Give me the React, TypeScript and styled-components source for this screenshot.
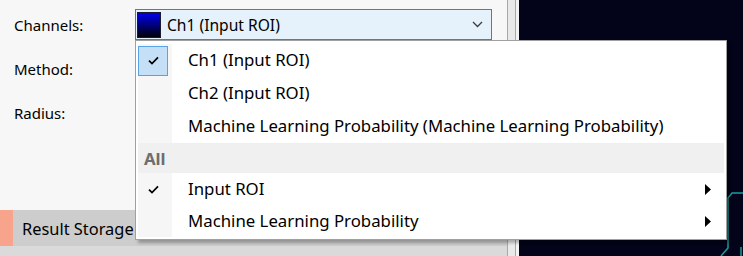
import React from "react";
import styled, { createGlobalStyle } from "styled-components";

const Global = createGlobalStyle`
  html, body { margin: 0; padding: 0; background: #f7f7f7; }
  body { font-family: "Noto Sans", "Open Sans", sans-serif; }
`;

const Screen = styled.div`
  position: relative;
  width: 743px;
  height: 256px;
  overflow: hidden;
  display: flex;
  font-family: "Noto Sans", "Open Sans", sans-serif;
  font-size: 15px;
  color: #000;
`;

const Panel = styled.div`
  width: 507px;
  display: flex;
  flex-direction: column;
  background: #f7f7f7;
`;

const Form = styled.div`
  flex: 1;
  display: flex;
  flex-direction: column;
  gap: 13px;
  padding: 9px 0 0 14px;
`;

const Row = styled.div`
  display: flex;
  align-items: center;
  height: 31px;
`;

const Label = styled.span`
  width: 121px;
  font-size: 15px;
`;

const Combo = styled.div`
  box-sizing: border-box;
  width: 357px;
  height: 31px;
  border: 1px solid #2c86da;
  background: #e5f1fb;
  display: flex;
  align-items: center;
  padding: 0 8px 0 1px;
  gap: 6px;
`;

const Swatch = styled.div`
  width: 24px;
  height: 26px;
  box-sizing: border-box;
  border: 1px solid #1a1a2a;
  background: linear-gradient(#0000f0, #000008);
`;

const ComboText = styled.span`
  flex: 1;
  font-size: 15.6px;
`;

const ResultBar = styled.div`
  height: 36px;
  display: flex;
  align-items: center;
  background: #cdcdcd;
`;

const Accent = styled.div`
  width: 13px;
  align-self: stretch;
  background: #f8a38c;
`;

const BarLabel = styled.span`
  margin-left: 9px;
  font-size: 16.4px;
`;

const BottomStrip = styled.div`
  height: 10px;
  background: #dadada;
`;

const ScrollStrip = styled.div`
  width: 12px;
  background: linear-gradient(
    to right,
    #a8a8a8 0 1px,
    #e9e9e9 1px 8px,
    #a8a8a8 8px 9px,
    #f2f2f2 9px
  );
`;

const Canvas = styled.div`
  flex: 1;
  background: #03031a;
  display: flex;
`;

const Plot = styled.svg`
  width: 100%;
  height: 100%;
`;

const Menu = styled.div`
  position: absolute;
  left: 135px;
  top: 40px;
  width: 592px;
  box-sizing: border-box;
  border: 1px solid #a0a0a0;
  background: #ffffff;
  padding: 3px 2px 2px;
  box-shadow: 3px 3px 3px rgba(0, 0, 0, 0.28);
  display: flex;
  flex-direction: column;
  font-size: 16.8px;
`;

const Item = styled.div<{ $h: number }>`
  display: flex;
  align-items: center;
  height: ${(p) => p.$h}px;
`;

const Gutter = styled.div`
  width: 34px;
  align-self: stretch;
  display: flex;
  align-items: center;
  background: #f6f6f6;
`;

const CheckBox = styled.div<{ $active?: boolean }>`
  box-sizing: border-box;
  width: 30px;
  height: 30px;
  display: flex;
  align-items: center;
  justify-content: center;
  background: ${(p) => (p.$active ? "#c5dff7" : "transparent")};
  border: 1px solid ${(p) => (p.$active ? "#5aa2e6" : "transparent")};
`;

const ItemText = styled.span`
  flex: 1;
  padding-left: 16px;
  line-height: 1;
`;

const SubArrow = styled.svg`
  margin-right: 13px;
`;

const Header = styled.div`
  height: 30px;
  display: flex;
  align-items: center;
  padding-left: 6px;
  background: #f0f0f0;
  font-weight: 700;
  color: #6e6e6e;
`;

const Check = () => (
  <svg width="11" height="9" viewBox="0 0 11 9">
    <path d="M1 4.6 L4 7.6 L10 1.4" fill="none" stroke="#000" strokeWidth="1.7" />
  </svg>
);

const Arrow = () => (
  <SubArrow width="6" height="11" viewBox="0 0 6 11">
    <polygon points="0,0 6,5.5 0,11" fill="#000" />
  </SubArrow>
);

type Entry = { label: string; checked?: boolean; active?: boolean; sub?: boolean; h: number };

const channelItems: Entry[] = [
  { label: "Ch1 (Input ROI)", checked: true, active: true, h: 33 },
  { label: "Ch2 (Input ROI)", h: 33 },
  { label: "Machine Learning Probability (Machine Learning Probability)", h: 33 },
];

const groupItems: Entry[] = [
  { label: "Input ROI", checked: true, sub: true, h: 32 },
  { label: "Machine Learning Probability", sub: true, h: 32 },
];

const MenuItem = ({ e }: { e: Entry }) => (
  <Item $h={e.h}>
    <Gutter>
      <CheckBox $active={e.active}>{e.checked && <Check />}</CheckBox>
    </Gutter>
    <ItemText>{e.label}</ItemText>
    {e.sub && <Arrow />}
  </Item>
);

export default function App() {
  return (
    <>
      <Global />
      <Screen>
        <Panel>
          <Form>
            <Row>
              <Label>Channels:</Label>
              <Combo>
                <Swatch />
                <ComboText>Ch1 (Input ROI)</ComboText>
                <svg width="11" height="7" viewBox="0 0 11 7">
                  <path d="M1 1 L5.5 5.5 L10 1" fill="none" stroke="#3a3a3a" strokeWidth="1.3" />
                </svg>
              </Combo>
            </Row>
            <Row>
              <Label>Method:</Label>
            </Row>
            <Row>
              <Label>Radius:</Label>
            </Row>
          </Form>
          <ResultBar>
            <Accent />
            <BarLabel>Result Storage</BarLabel>
          </ResultBar>
          <BottomStrip />
        </Panel>
        <ScrollStrip />
        <Canvas>
          <Plot viewBox="0 0 224 256" preserveAspectRatio="none">
            <polyline
              points="202,256 209,248 209,198 213,193 224,193"
              fill="none"
              stroke="#1a9ea0"
              strokeWidth="1.5"
            />
            <line x1="222" y1="247" x2="222" y2="256" stroke="#1a9ea0" strokeWidth="1.5" />
          </Plot>
        </Canvas>
        <Menu>
          {channelItems.map((e) => (
            <MenuItem key={e.label} e={e} />
          ))}
          <Header>All</Header>
          {groupItems.map((e) => (
            <MenuItem key={e.label} e={e} />
          ))}
        </Menu>
      </Screen>
    </>
  );
}
